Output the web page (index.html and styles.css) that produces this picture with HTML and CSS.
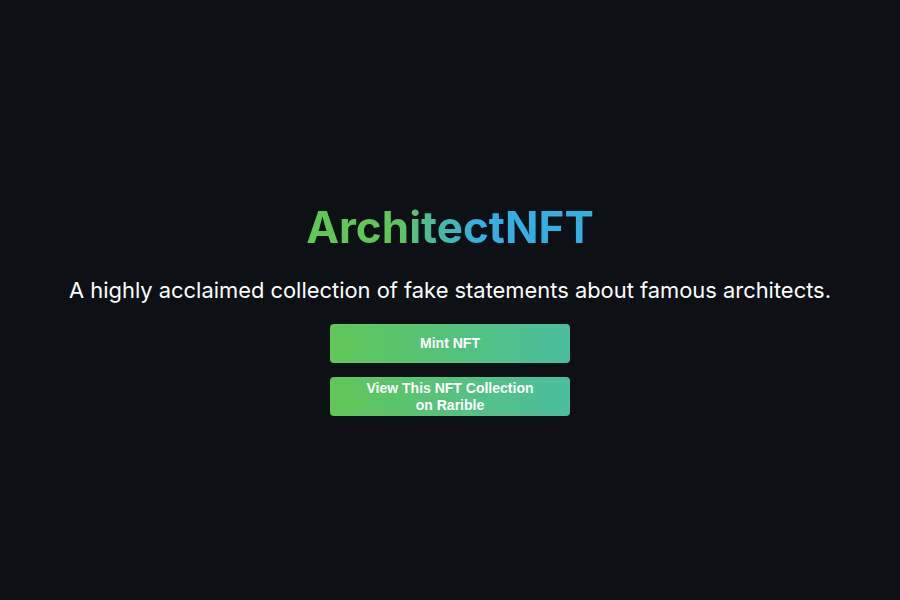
FILE: index.html
```html
<!DOCTYPE html>
<html>
<head>
<meta charset="utf-8">
<link rel="stylesheet" href="styles.css">
</head>
<body>
<div class="app">
  <h1 class="header">ArchitectNFT</h1>
  <p class="sub-text">A highly acclaimed collection of fake statements about famous architects.</p>
  <button class="cta-button">Mint NFT</button>
  <button class="cta-button">View This NFT Collection<br>on Rarible</button>
</div>
</body>
</html>
```
FILE: styles.css
```css
html, body {
  margin: 0;
  padding: 0;
  background: #0d1116;
}
.app {
  height: 600px;
  display: flex;
  flex-direction: column;
  align-items: center;
  font-family: Inter, "Noto Sans", sans-serif;
  padding-top: 203px;
  box-sizing: border-box;
}
.header {
  margin: 0;
  font-size: 44px;
  font-weight: 700;
  line-height: 48px;
  background: linear-gradient(to right, #60c657 30%, #35aee2 60%);
  -webkit-background-clip: text;
  background-clip: text;
  color: transparent;
}
.sub-text {
  margin: 24px 0 19px;
  font-size: 21.9px;
  line-height: 30px;
  color: #ffffff;
}
.cta-button {
  width: 240px;
  height: 39px;
  border: 0;
  border-radius: 4px;
  background: linear-gradient(to right, #60c657, #4bbea0);
  color: #ffffff;
  font-family: "Liberation Sans", Arial, sans-serif;
  font-weight: 700;
  font-size: 14px;
  line-height: 17px;
  padding: 0;
  cursor: pointer;
}
.cta-button + .cta-button {
  margin-top: 14px;
}
```
